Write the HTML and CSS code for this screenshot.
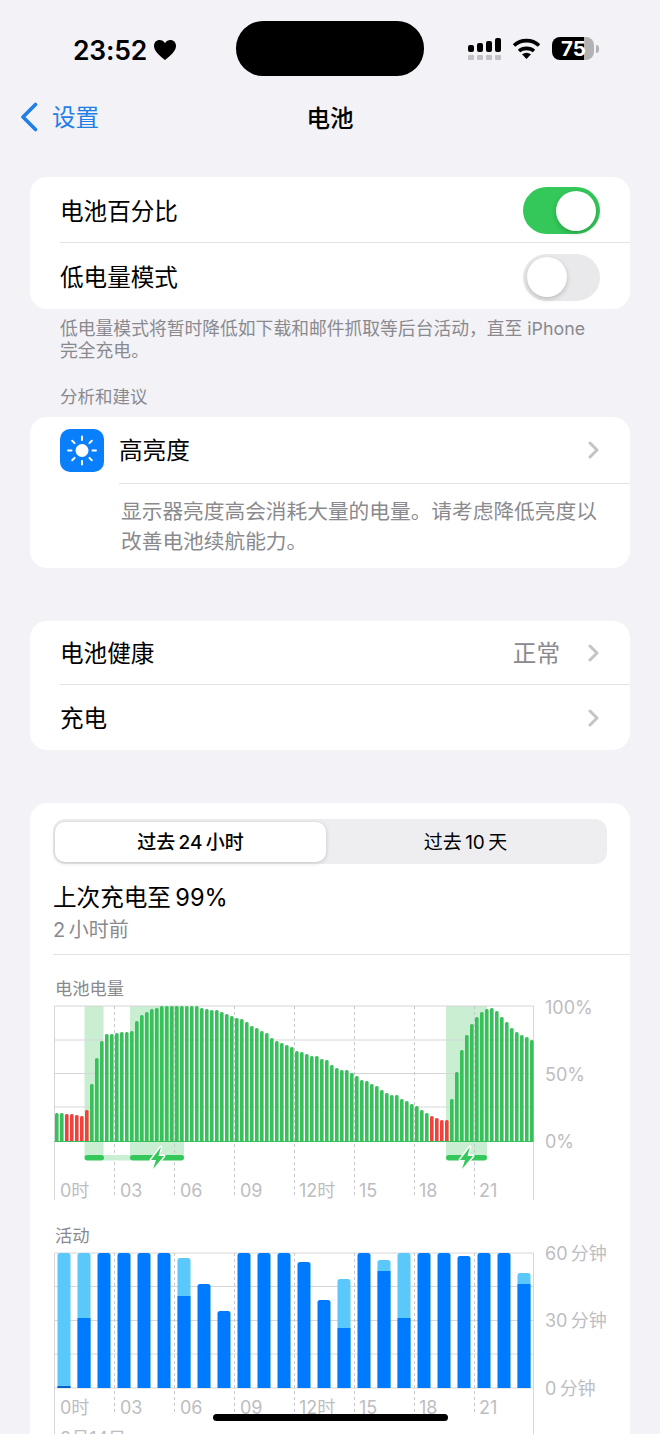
FILE: index.html
```html
<!DOCTYPE html>
<html lang="zh-CN">
<head>
    <meta charset="UTF-8">
    <meta name="viewport" content="width=device-width, initial-scale=1.0">
    <title>电池</title>
    <link rel="stylesheet" href="styles.css">
</head>
<body>
    <div class="status">
        <div class="status-left">
            <span class="time">23:52</span>
            <svg class="heart" viewBox="0 0 22 20"><path d="M11 20C5 15.500 0 11 0 5.800 0 2.400 2.500 0 5.600 0 7.800 0 9.800 1.200 11 3.200 12.200 1.200 14.200 0 16.400 0 19.500 0 22 2.400 22 5.800 22 11 17 15.500 11 20Z"/></svg>
        </div>
        <div class="island"></div>
        <div class="status-right">
            <svg class="signal" viewBox="0 0 33 22">
                <rect x="0" y="7" width="6" height="7" rx="2"/>
                <rect x="9" y="5" width="6" height="9" rx="2"/>
                <rect x="18" y="3" width="6" height="11" rx="2"/>
                <rect x="27" y="0" width="6" height="14" rx="2"/>
                <g class="signal-off">
                    <rect x="0" y="17" width="6" height="5" rx="1"/>
                    <rect x="9" y="17" width="6" height="5" rx="1"/>
                    <rect x="18" y="17" width="6" height="5" rx="1"/>
                    <rect x="27" y="17" width="6" height="5" rx="1"/>
                </g>
            </svg>
            <svg class="wifi" viewBox="0 0 29 21">
                <path class="wifi-arc" d="M2 7.500C9 1 20 1 27 7.500"/>
                <path class="wifi-arc" d="M7 13C11 9.500 18 9.500 22 13"/>
                <path d="M14.500 21L10 16.200C13 14.200 16 14.200 19 16.200Z"/>
            </svg>
            <div class="battery">75</div>
            <div class="battery-nub"></div>
        </div>
    </div>

    <div class="nav">
        <div class="nav-back">
            <svg class="nav-chevron" viewBox="0 0 18 30"><path d="M15.500 2.500L3 15L15.500 27.500"/></svg>
            <span>设置</span>
        </div>
        <div class="nav-title">电池</div>
        <div></div>
    </div>

    <div class="page">
        <div class="card card-first">
            <div class="row">
                <span>电池百分比</span>
                <div class="toggle toggle-on"><div class="knob"></div></div>
            </div>
            <div class="row">
                <span>低电量模式</span>
                <div class="toggle"><div class="knob"></div></div>
            </div>
        </div>
        <p class="footnote">低电量模式将暂时降低如下载和邮件抓取等后台活动，直至 iPhone<br>完全充电。</p>
        <p class="section-label">分析和建议</p>

        <div class="card">
            <div class="tip-head">
                <div class="tip-icon">
                    <svg viewBox="0 0 44 43">
                        <circle cx="22" cy="21.500" r="6.500"/>
                        <path class="ray" d="M22 7.500v3.500M22 32v3.500M8 21.500h3.500M32.500 21.500h3.500M12.200 11.700l2.400 2.400M29.400 28.900l2.400 2.400M12.200 31.300l2.400-2.400M29.400 14.100l2.400-2.400"/>
                    </svg>
                </div>
                <div class="tip-title">
                    <span>高亮度</span>
                    <svg class="chevron" viewBox="0 0 11 18"><path d="M2 2l7 7-7 7"/></svg>
                </div>
            </div>
            <p class="tip-text">显示器亮度高会消耗大量的电量。请考虑降低亮度以<br>改善电池续航能力。</p>
        </div>

        <div class="card card-gap">
            <div class="row row-link">
                <span>电池健康</span>
                <div class="row-end">
                    <span class="row-value">正常</span>
                    <svg class="chevron" viewBox="0 0 11 18"><path d="M2 2l7 7-7 7"/></svg>
                </div>
            </div>
            <div class="row row-link">
                <span>充电</span>
                <svg class="chevron" viewBox="0 0 11 18"><path d="M2 2l7 7-7 7"/></svg>
            </div>
        </div>

        <div class="card card-gap usage">
            <div class="segment">
                <div class="segment-item segment-active">过去&#8201;24&#8201;小时</div>
                <div class="segment-item">过去&#8201;10&#8201;天</div>
            </div>
            <div class="last-charge">上次充电至&#8201;99%</div>
            <div class="last-time">2&#8201;小时前</div>
            <div class="usage-rule"></div>

            <svg class="chart chart-battery" viewBox="53 978 577 247">
                <defs>
                    <clipPath id="clipBattery"><rect x="50" y="1000" width="490" height="141"/></clipPath>
                    <path id="bolt" d="M161 1147L151 1160H156L153 1169L164 1156H158.500Z"/>
                </defs>
                <text class="chart-title" x="55" y="995">电池电量</text>
                <g class="shade">
                    <rect x="84.500" y="1006" width="19" height="152"/>
                    <rect x="130" y="1006" width="54" height="152"/>
                    <rect x="446" y="1006" width="41" height="152"/>
                </g>
                <path class="grid" d="M54.500 1006H533.500M54.500 1040H533.500M54.500 1073.500H533.500M54.500 1107H533.500M54.500 1006V1200M533.500 1006V1200"/>
                <path class="dash" d="M114.500 1006V1198M174.500 1006V1198M234.500 1006V1198M294.500 1006V1198M354.500 1006V1198M414.500 1006V1198M474.500 1006V1198"/>
                <g clip-path="url(#clipBattery)">
                    <rect class="bar" x="55" y="1113"/><rect class="bar" x="60" y="1113"/>
                    <rect class="bar low" x="65" y="1114"/><rect class="bar low" x="70" y="1114"/><rect class="bar low" x="75" y="1115"/><rect class="bar low" x="80" y="1116"/><rect class="bar low" x="85" y="1110"/>
                    <rect class="bar" x="90" y="1084"/><rect class="bar" x="95" y="1058"/><rect class="bar" x="100" y="1041"/><rect class="bar" x="105" y="1034"/><rect class="bar" x="110" y="1034"/>
                    <rect class="bar" x="115" y="1033"/><rect class="bar" x="120" y="1032"/><rect class="bar" x="125" y="1032"/><rect class="bar" x="130" y="1031"/><rect class="bar" x="135" y="1021"/>
                    <rect class="bar" x="140" y="1015"/><rect class="bar" x="145" y="1012"/><rect class="bar" x="150" y="1009"/><rect class="bar" x="155" y="1008"/><rect class="bar" x="160" y="1006"/>
                    <rect class="bar" x="165" y="1006"/><rect class="bar" x="170" y="1006"/><rect class="bar" x="175" y="1006"/><rect class="bar" x="180" y="1006"/><rect class="bar" x="185" y="1006"/>
                    <rect class="bar" x="190" y="1006"/><rect class="bar" x="195" y="1006"/><rect class="bar" x="200" y="1008"/><rect class="bar" x="205" y="1009"/><rect class="bar" x="210" y="1010"/>
                    <rect class="bar" x="215" y="1010"/><rect class="bar" x="220" y="1012"/><rect class="bar" x="225" y="1014"/><rect class="bar" x="230" y="1016"/><rect class="bar" x="235" y="1018"/>
                    <rect class="bar" x="240" y="1019"/><rect class="bar" x="245" y="1022"/><rect class="bar" x="250" y="1026"/><rect class="bar" x="255" y="1028"/><rect class="bar" x="260" y="1031"/>
                    <rect class="bar" x="265" y="1033"/><rect class="bar" x="270" y="1038"/><rect class="bar" x="275" y="1041"/><rect class="bar" x="280" y="1043"/><rect class="bar" x="285" y="1045"/>
                    <rect class="bar" x="290" y="1047"/><rect class="bar" x="295" y="1051"/><rect class="bar" x="300" y="1052"/><rect class="bar" x="305" y="1054"/><rect class="bar" x="310" y="1056"/>
                    <rect class="bar" x="315" y="1056"/><rect class="bar" x="320" y="1059"/><rect class="bar" x="325" y="1060"/><rect class="bar" x="330" y="1065"/><rect class="bar" x="335" y="1068"/>
                    <rect class="bar" x="340" y="1070"/><rect class="bar" x="345" y="1070"/><rect class="bar" x="350" y="1073"/><rect class="bar" x="355" y="1076"/><rect class="bar" x="360" y="1080"/>
                    <rect class="bar" x="365" y="1081"/><rect class="bar" x="370" y="1084"/><rect class="bar" x="375" y="1086"/><rect class="bar" x="380" y="1090"/><rect class="bar" x="385" y="1093"/>
                    <rect class="bar" x="390" y="1095"/><rect class="bar" x="395" y="1095"/><rect class="bar" x="400" y="1099"/><rect class="bar" x="405" y="1101"/><rect class="bar" x="410" y="1104"/>
                    <rect class="bar" x="415" y="1106"/><rect class="bar" x="420" y="1110"/><rect class="bar" x="425" y="1113"/>
                    <rect class="bar low" x="430" y="1116"/><rect class="bar low" x="435" y="1118"/><rect class="bar low" x="440" y="1120"/><rect class="bar low" x="445" y="1120"/>
                    <rect class="bar" x="450" y="1099"/><rect class="bar" x="455" y="1072"/><rect class="bar" x="460" y="1050"/><rect class="bar" x="465" y="1035"/><rect class="bar" x="470" y="1024"/>
                    <rect class="bar" x="475" y="1017"/><rect class="bar" x="480" y="1012"/><rect class="bar" x="485" y="1009"/><rect class="bar" x="490" y="1008"/><rect class="bar" x="495" y="1011"/>
                    <rect class="bar" x="500" y="1017"/><rect class="bar" x="505" y="1022"/><rect class="bar" x="510" y="1028"/><rect class="bar" x="515" y="1032"/><rect class="bar" x="520" y="1035"/>
                    <rect class="bar" x="525" y="1037"/><rect class="bar" x="530" y="1040"/>
                </g>
                <path class="baseline" d="M54.500 1141.500H533.500"/>
                <rect class="charge-gap" x="103" y="1155" width="28" height="5.500"/>
                <g class="charge">
                    <rect x="84.500" y="1155" width="19.500" height="5.500" rx="2.700"/>
                    <rect x="130" y="1155" width="54" height="5.500" rx="2.700"/>
                    <rect x="446" y="1155" width="41" height="5.500" rx="2.700"/>
                </g>
                <use class="bolt" href="#bolt"/>
                <use class="bolt" href="#bolt" x="309"/>
                <g class="axis-text">
                    <text x="60" y="1196.500">0时</text><text x="120" y="1196.500">03</text><text x="180" y="1196.500">06</text>
                    <text x="240" y="1196.500">09</text><text x="299" y="1196.500">12时</text><text x="359" y="1196.500">15</text>
                    <text x="419" y="1196.500">18</text><text x="479" y="1196.500">21</text>
                    <text x="545" y="1013.500">100%</text><text x="545" y="1080.500">50%</text><text x="545" y="1147.500">0%</text>
                </g>
            </svg>

            <svg class="chart chart-activity" viewBox="53 1225 577 225">
                <defs>
                    <clipPath id="clipActivity"><rect x="50" y="1247" width="490" height="141"/></clipPath>
                </defs>
                <text class="chart-title" x="55" y="1242">活动</text>
                <path class="grid" d="M54.500 1253H533.500M54.500 1286.500H533.500M54.500 1320.500H533.500M54.500 1354H533.500M54.500 1388H533.500M54.500 1253V1447M533.500 1253V1447"/>
                <path class="dash" d="M114.500 1253V1414M174.500 1253V1414M234.500 1253V1414M294.500 1253V1414M354.500 1253V1414M414.500 1253V1414M474.500 1253V1414"/>
                <g clip-path="url(#clipActivity)">
                    <rect class="act act-light" x="57.500" y="1253"/><rect class="act act-base" x="57.500" y="1386"/>
                    <rect class="act act-light" x="77.500" y="1253"/><rect class="act act-mid" x="77.500" y="1318"/>
                    <rect class="act" x="97.500" y="1253"/><rect class="act" x="117.500" y="1253"/><rect class="act" x="137.500" y="1253"/><rect class="act" x="157.500" y="1253"/>
                    <rect class="act act-light" x="177.500" y="1258"/><rect class="act act-mid" x="177.500" y="1296"/>
                    <rect class="act" x="197.500" y="1284"/><rect class="act" x="217.500" y="1311"/>
                    <rect class="act" x="237.500" y="1253"/><rect class="act" x="257.500" y="1253"/><rect class="act" x="277.500" y="1253"/>
                    <rect class="act" x="297.500" y="1262"/><rect class="act" x="317.500" y="1300"/>
                    <rect class="act act-light" x="337.500" y="1279"/><rect class="act act-mid" x="337.500" y="1328"/>
                    <rect class="act" x="357.500" y="1253"/>
                    <rect class="act act-light" x="377.500" y="1260"/><rect class="act act-mid" x="377.500" y="1271"/>
                    <rect class="act act-light" x="397.500" y="1253"/><rect class="act act-mid" x="397.500" y="1318"/>
                    <rect class="act" x="417.500" y="1253"/><rect class="act" x="437.500" y="1253"/><rect class="act" x="457.500" y="1256"/>
                    <rect class="act" x="477.500" y="1253"/><rect class="act" x="497.500" y="1253"/>
                    <rect class="act act-light" x="517.500" y="1273"/><rect class="act act-mid" x="517.500" y="1284"/>
                </g>
                <g class="axis-text">
                    <text x="60" y="1413.500">0时</text><text x="120" y="1413.500">03</text><text x="180" y="1413.500">06</text>
                    <text x="240" y="1413.500">09</text><text x="299" y="1413.500">12时</text><text x="359" y="1413.500">15</text>
                    <text x="419" y="1413.500">18</text><text x="479" y="1413.500">21</text>
                    <text x="545" y="1260">60&#8201;分钟</text><text x="545" y="1327">30&#8201;分钟</text><text x="545" y="1394.500">0&#8201;分钟</text>
                    <text x="60" y="1445">8月14日</text>
                </g>
            </svg>
        </div>
    </div>

    <div class="home-bar"></div>
</body>
</html>
```
FILE: styles.css
```css
html, body {
    margin: 0;
    padding: 0;
}
body {
    position: relative;
    width: 660px;
    height: 1434px;
    overflow: hidden;
    background-color: #f2f2f7;
    color: #000;
    font-family: Inter, "Noto Sans CJK SC", sans-serif;
    font-size: 23.600px;
}
p {
    margin: 0;
}

/* status bar */
.status {
    display: flex;
    align-items: center;
    height: 55px;
    padding-top: 21px;
    padding-bottom: 21px;
}
.status-left {
    display: flex;
    align-items: center;
    width: 163px;
    margin-left: 73px;
    margin-top: 2px;
}
.time {
    font-size: 26.500px;
    font-weight: 600;
    letter-spacing: -0.2px;
    line-height: 32px;
}
.heart {
    width: 22px;
    height: 20px;
    margin-left: 7px;
}
.island {
    width: 188px;
    height: 55px;
    border-radius: 27px;
    background-color: #000;
}
.status-right {
    display: flex;
    align-items: center;
    margin-left: 44px;
}
.signal {
    width: 33px;
    height: 22px;
}
.signal-off {
    fill: #c2c2c6;
}
.wifi {
    width: 29px;
    height: 21px;
    margin-left: 11px;
}
.wifi-arc {
    fill: none;
    stroke: #000;
    stroke-width: 3.6;
}
.battery {
    box-sizing: border-box;
    width: 42px;
    height: 23px;
    margin-left: 11px;
    padding-left: 9px;
    border-radius: 8px;
    background: linear-gradient(90deg, #000 32px, #b2b2b4 32px);
    color: #fff;
    font-size: 20.500px;
    font-weight: 700;
    line-height: 23px;
}
.battery-nub {
    width: 3px;
    height: 8px;
    margin-left: 2px;
    border-radius: 0 3px 3px 0;
    background-color: #b2b2b4;
}

/* nav */
.nav {
    display: grid;
    grid-template-columns: 1fr auto 1fr;
    align-items: center;
    height: 42px;
}
.nav-back {
    display: flex;
    align-items: center;
    padding-left: 20px;
    color: #1f7fe6;
}
.nav-back span {
    margin-top: -4px;
}
.nav-chevron {
    width: 18px;
    height: 30px;
    margin-top: -2px;
    margin-right: 14px;
}
.nav-chevron path {
    fill: none;
    stroke: #1f7fe6;
    stroke-width: 3.6;
    stroke-linecap: round;
    stroke-linejoin: round;
}
.nav-title {
    margin-top: -2px;
    font-weight: 500;
}

/* cards */
.page {
    padding: 0 30px;
}
.card {
    background-color: #fff;
    border-radius: 17px;
}
.card-first {
    margin-top: 38px;
}
.card-gap {
    margin-top: 53px;
}
.row {
    display: flex;
    align-items: center;
    justify-content: space-between;
    height: 65px;
    margin-left: 30px;
    padding-right: 30px;
    box-sizing: border-box;
}
.row + .row {
    height: 67px;
    border-top: 1px solid #e3e3e5;
}
.row-link {
    height: 63px;
    padding-right: 31px;
}
.row-link + .row-link {
    height: 66px;
}
.row-link > span {
    margin-top: -2px;
}
.row-end {
    display: flex;
    align-items: center;
}
.row-value {
    color: #8a8a8e;
    margin-right: 28px;
    margin-top: -2px;
}
.chevron {
    width: 11px;
    height: 18px;
}
.chevron path {
    fill: none;
    stroke: #c4c4c7;
    stroke-width: 3;
    stroke-linecap: round;
    stroke-linejoin: round;
}
.toggle {
    display: flex;
    align-items: center;
    box-sizing: border-box;
    width: 77px;
    height: 47px;
    margin-top: 2px;
    padding: 0 4px;
    border-radius: 24px;
    background-color: #e9e9eb;
}
.toggle-on {
    justify-content: flex-end;
    background-color: #34c759;
}
.knob {
    width: 40px;
    height: 40px;
    border-radius: 50%;
    background-color: #fff;
    box-shadow: 0 2px 5px rgba(0, 0, 0, 0.2);
}
.footnote {
    margin-top: 9px;
    padding-left: 30px;
    color: #8a8a8e;
    font-size: 17.800px;
    line-height: 22px;
}
.section-label {
    margin-top: 24px;
    margin-bottom: 9px;
    padding-left: 30px;
    color: #8a8a8e;
    font-size: 17.500px;
    line-height: 22px;
}

/* high brightness tip */
.tip-head {
    display: flex;
    align-items: center;
    padding-left: 30px;
}
.tip-icon {
    width: 44px;
    height: 43px;
    border-radius: 10px;
    background-color: #0a7ffb;
}
.tip-icon svg {
    display: block;
    width: 44px;
    height: 43px;
}
.tip-icon circle {
    fill: #fff;
}
.ray {
    fill: none;
    stroke: #fff;
    stroke-width: 2;
    stroke-linecap: round;
}
.tip-title {
    display: flex;
    flex: 1;
    align-items: center;
    justify-content: space-between;
    height: 67px;
    margin-left: 15px;
    padding-right: 31px;
    border-bottom: 1px solid #e3e3e5;
    box-sizing: border-box;
}
.tip-title span {
    margin-top: -2px;
}
.tip-text {
    padding: 13px 0 11px 91px;
    color: #8a8a8e;
    font-size: 20.700px;
    line-height: 30px;
}

/* usage card */
.usage {
    padding: 16px 0 0 23px;
    height: 700px;
}
.segment {
    display: flex;
    box-sizing: border-box;
    width: 554px;
    height: 45px;
    padding: 3px 2px 2px;
    border-radius: 12px;
    background-color: #eeeef0;
}
.segment-item {
    flex: 1;
    height: 40px;
    font-size: 19px;
    line-height: 42px;
    text-align: center;
}
.segment-active {
    flex: none;
    width: 271px;
    border-radius: 10px;
    background-color: #fff;
    box-shadow: 0 1px 4px rgba(0, 0, 0, 0.18);
    font-weight: 500;
}
.last-charge {
    margin-top: 18px;
    line-height: 32px;
}
.last-time {
    margin-top: 2px;
    color: #8a8a8e;
    font-size: 20px;
    line-height: 28px;
}
.usage-rule {
    margin-top: 10px;
    border-top: 1px solid #e3e3e5;
}
.chart {
    display: block;
    width: 577px;
}
.chart-battery {
    margin-top: 23px;
    height: 247px;
}
.chart-activity {
    height: 225px;
}

/* chart parts */
.chart-title {
    fill: #8a8a8e;
    font-size: 17.300px;
}
.shade {
    fill: #c9eed2;
}
.grid {
    fill: none;
    stroke: #d6d6d9;
    stroke-width: 1;
}
.dash {
    fill: none;
    stroke: #c8c8cc;
    stroke-width: 1;
    stroke-dasharray: 3 3;
}
.bar {
    width: 3.600px;
    height: 150px;
    rx: 1.500px;
    fill: #38c05b;
}
.bar.low {
    fill: #f2403a;
}
.baseline {
    stroke: #38c05b;
    stroke-width: 1;
}
.charge {
    fill: #34c759;
}
.charge-gap {
    fill: #c9eed2;
}
.bolt {
    fill: #34c759;
    stroke: #fff;
    stroke-width: 3;
    paint-order: stroke;
    stroke-linejoin: round;
}
.act {
    width: 13px;
    height: 150px;
    rx: 2.500px;
    fill: #007aff;
}
.act-light {
    fill: #5ac8fa;
}
.act-mid {
    rx: 0;
}
.act-base {
    rx: 0;
    fill: #0060c8;
}
.axis-text {
    fill: #bdbdc2;
    font-size: 18px;
}
.home-bar {
    position: absolute;
    left: 213px;
    top: 1414px;
    width: 235px;
    height: 7px;
    border-radius: 4px;
    background-color: #000;
}
```
